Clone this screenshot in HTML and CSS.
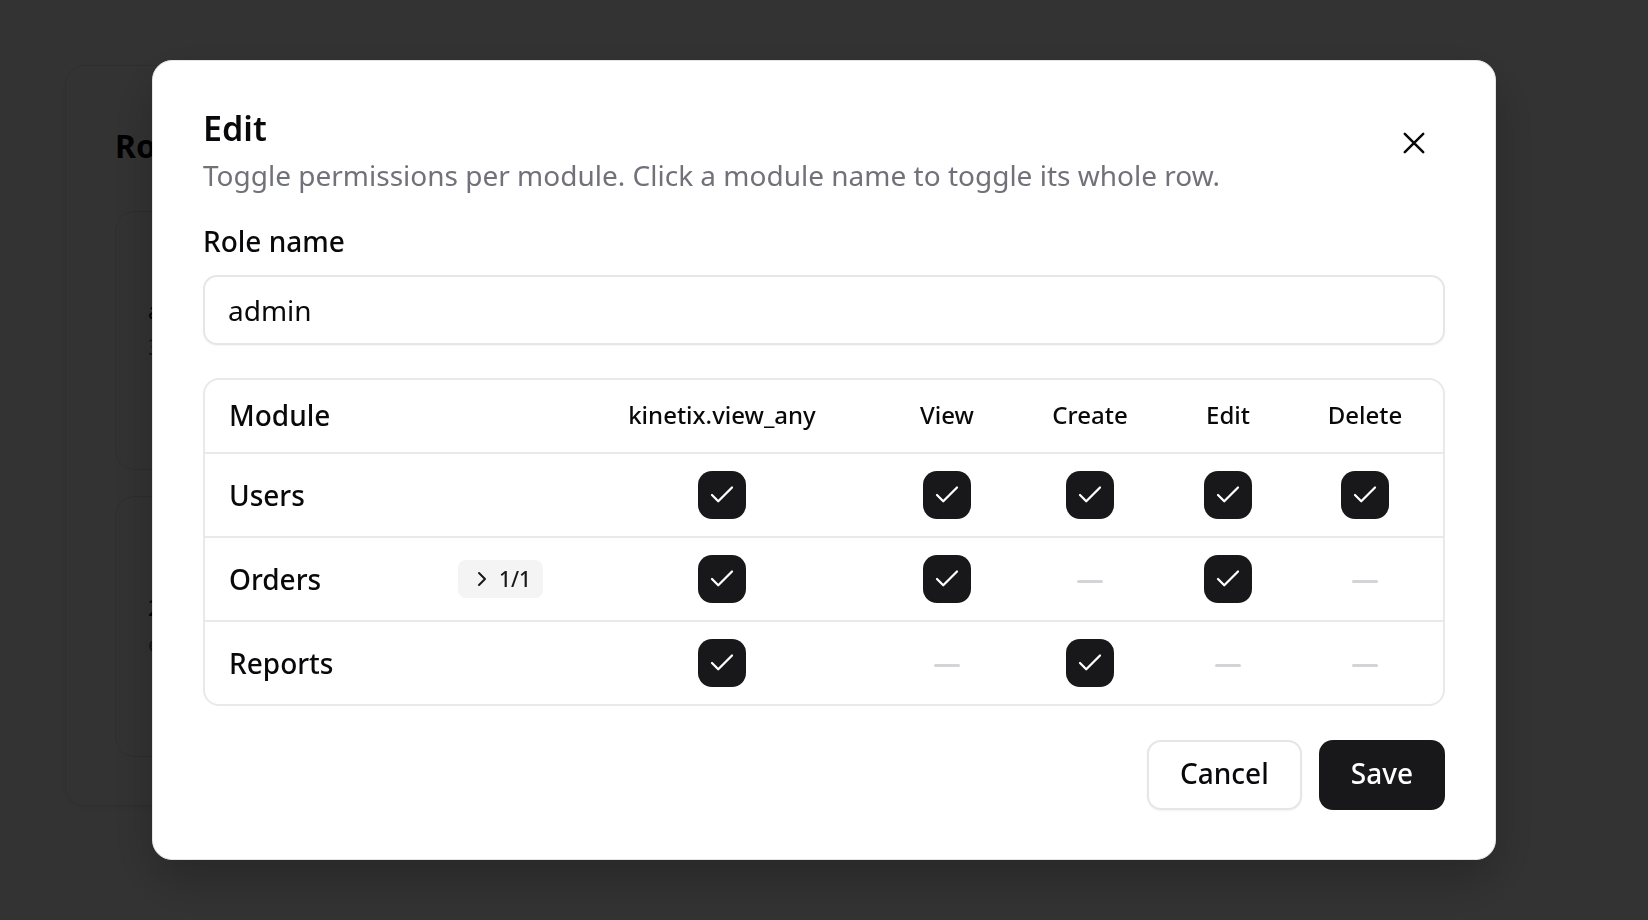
FILE: index.html
```html
<!DOCTYPE html>
<html lang="en">
<head>
<meta charset="utf-8">
<title>Edit role</title>
<link rel="stylesheet" href="styles.css">
</head>
<body>
<div class="page">
  <section class="bg-card">
    <h2 class="bg-title">Roles</h2>
    <div class="bg-inner">
      <div class="bg-line bg-line-a">admin</div>
      <div class="bg-line">3 modules</div>
    </div>
    <div class="bg-inner bg-inner-b">
      <div class="bg-line bg-line-a">2 users</div>
      <div class="bg-line">editor</div>
    </div>
  </section>
</div>

<div class="overlay">
  <div class="modal">
    <button class="close" aria-label="Close">
      <svg width="22" height="22" viewBox="0 0 22 22" fill="none" stroke="#09090b" stroke-width="2.5" stroke-linecap="round"><path d="M1.8 1.8 20.2 20.2M20.2 1.8 1.8 20.2"/></svg>
    </button>
    <h1 class="title">Edit</h1>
    <p class="subtitle">Toggle permissions per module. Click a module name to toggle its whole row.</p>

    <label class="label">Role name</label>
    <div class="input">admin</div>

    <div class="table">
      <div class="row head">
        <div class="cell name">Module</div>
        <div class="cell col">kinetix.view_any</div>
        <div class="cell col">View</div>
        <div class="cell col">Create</div>
        <div class="cell col">Edit</div>
        <div class="cell col">Delete</div>
      </div>
      <div class="row">
        <div class="cell name">Users</div>
        <div class="cell"><span class="cb"><svg width="30" height="30" viewBox="0 0 24 24" fill="none" stroke="#fff" stroke-width="1.8" stroke-linecap="round" stroke-linejoin="round"><path d="M20 6 9 17l-5-5"/></svg></span></div>
        <div class="cell"><span class="cb"><svg width="30" height="30" viewBox="0 0 24 24" fill="none" stroke="#fff" stroke-width="1.8" stroke-linecap="round" stroke-linejoin="round"><path d="M20 6 9 17l-5-5"/></svg></span></div>
        <div class="cell"><span class="cb"><svg width="30" height="30" viewBox="0 0 24 24" fill="none" stroke="#fff" stroke-width="1.8" stroke-linecap="round" stroke-linejoin="round"><path d="M20 6 9 17l-5-5"/></svg></span></div>
        <div class="cell"><span class="cb"><svg width="30" height="30" viewBox="0 0 24 24" fill="none" stroke="#fff" stroke-width="1.8" stroke-linecap="round" stroke-linejoin="round"><path d="M20 6 9 17l-5-5"/></svg></span></div>
        <div class="cell"><span class="cb"><svg width="30" height="30" viewBox="0 0 24 24" fill="none" stroke="#fff" stroke-width="1.8" stroke-linecap="round" stroke-linejoin="round"><path d="M20 6 9 17l-5-5"/></svg></span></div>
      </div>
      <div class="row">
        <div class="cell name">Orders
          <span class="badge"><svg width="24" height="24" viewBox="0 0 24 24" fill="none" stroke="#18181b" stroke-width="2" stroke-linecap="round" stroke-linejoin="round"><path d="m9 18 6-6-6-6"/></svg>1/1</span>
        </div>
        <div class="cell"><span class="cb"><svg width="30" height="30" viewBox="0 0 24 24" fill="none" stroke="#fff" stroke-width="1.8" stroke-linecap="round" stroke-linejoin="round"><path d="M20 6 9 17l-5-5"/></svg></span></div>
        <div class="cell"><span class="cb"><svg width="30" height="30" viewBox="0 0 24 24" fill="none" stroke="#fff" stroke-width="1.8" stroke-linecap="round" stroke-linejoin="round"><path d="M20 6 9 17l-5-5"/></svg></span></div>
        <div class="cell"><span class="dash"></span></div>
        <div class="cell"><span class="cb"><svg width="30" height="30" viewBox="0 0 24 24" fill="none" stroke="#fff" stroke-width="1.8" stroke-linecap="round" stroke-linejoin="round"><path d="M20 6 9 17l-5-5"/></svg></span></div>
        <div class="cell"><span class="dash"></span></div>
      </div>
      <div class="row last">
        <div class="cell name">Reports</div>
        <div class="cell"><span class="cb"><svg width="30" height="30" viewBox="0 0 24 24" fill="none" stroke="#fff" stroke-width="1.8" stroke-linecap="round" stroke-linejoin="round"><path d="M20 6 9 17l-5-5"/></svg></span></div>
        <div class="cell"><span class="dash"></span></div>
        <div class="cell"><span class="cb"><svg width="30" height="30" viewBox="0 0 24 24" fill="none" stroke="#fff" stroke-width="1.8" stroke-linecap="round" stroke-linejoin="round"><path d="M20 6 9 17l-5-5"/></svg></span></div>
        <div class="cell"><span class="dash"></span></div>
        <div class="cell"><span class="dash"></span></div>
      </div>
    </div>

    <div class="actions">
      <button class="btn btn-outline">Cancel</button>
      <button class="btn btn-primary">Save</button>
    </div>
  </div>
</div>
</body>
</html>
```
FILE: styles.css
```css
* { box-sizing: border-box; }
html, body { margin: 0; padding: 0; }
body {
  width: 1648px;
  height: 920px;
  overflow: hidden;
  background: #ffffff;
  font-family: "Noto Sans", "Open Sans", sans-serif;
  color: #09090b;
}

/* background page */
.page { padding: 65px; }
.bg-card {
  width: 1400px;
  height: 741px;
  border: 1px solid #e4e4e7;
  border-radius: 20px;
  padding: 60px 49px 48px;
  box-shadow: 0 2px 6px rgba(0,0,0,0.08);
}
.bg-title {
  margin: 0;
  font-size: 32px;
  line-height: 40px;
  font-weight: 700;
}
.bg-inner {
  margin-top: 45px;
  height: 259px;
  border: 1px solid #e4e4e7;
  border-radius: 20px;
  padding: 80px 32px;
}
.bg-inner-b { margin-top: 26px; height: 261px; padding-top: 92px; }
.bg-line { font-size: 22px; line-height: 36px; color: #71717a; }
.bg-line-a { color: #09090b; }

/* overlay + modal */
.overlay {
  position: fixed;
  inset: 0;
  background: rgba(0,0,0,0.8);
  display: flex;
  align-items: center;
  justify-content: center;
}
.modal {
  position: relative;
  width: 1344px;
  background: #fff;
  border: 1px solid #e4e4e7;
  border-radius: 20px;
  padding: 50px 50px 49px;
  display: flex;
  flex-direction: column;
  box-shadow: 0 20px 50px rgba(0,0,0,0.25);
}
.close {
  position: absolute;
  top: 66px;
  right: 65px;
  width: 32px;
  height: 32px;
  padding: 0;
  border: 0;
  background: transparent;
  display: flex;
  align-items: center;
  justify-content: center;
}
.title {
  margin: 0;
  font-size: 34px;
  line-height: 35px;
  font-weight: 600;
  color: #09090b;
}
.subtitle {
  margin: 9px 0 0;
  font-size: 28px;
  line-height: 40px;
  color: #71717a;
}
.label {
  margin-top: 26px;
  font-size: 28px;
  line-height: 40px;
  font-weight: 500;
  color: #09090b;
}
.input {
  margin-top: 14px;
  height: 70px;
  border: 2px solid #e6e6e9;
  border-radius: 14px;
  padding: 0 23px;
  display: flex;
  align-items: center;
  font-size: 28px;
  color: #09090b;
  box-shadow: 0 1px 2px rgba(0,0,0,0.04);
}

/* permissions table */
.table {
  margin-top: 33px;
  border: 2px solid #e9e9ec;
  border-radius: 16px;
  overflow: hidden;
}
.row {
  display: grid;
  grid-template-columns: 356px 322px 128px 158px 118px 1fr;
  height: 84px;
  border-bottom: 2px solid #e9e9ec;
}
.row.head { height: 74px; padding-bottom: 3px; }
.row.last { border-bottom: 0; height: 82px; }
.cell {
  display: flex;
  align-items: center;
  justify-content: center;
}
.cell.name {
  justify-content: space-between;
  padding: 0 18px 0 24px;
  font-size: 28px;
  font-weight: 500;
  color: #09090b;
}
.cell.col {
  font-size: 24px;
  font-weight: 500;
  color: #09090b;
}
.cb {
  width: 48px;
  height: 48px;
  border-radius: 14px;
  background: #18181b;
  display: flex;
  align-items: center;
  justify-content: center;
}
.dash {
  width: 26px;
  height: 3px;
  border-radius: 2px;
  background: #d4d4d8;
  margin-top: 4px;
}
.badge {
  height: 38px;
  padding: 0 12px 0 12px;
  border-radius: 8px;
  background: #f4f4f5;
  display: flex;
  align-items: center;
  gap: 5px;
  font-size: 21px;
  font-weight: 500;
  color: #18181b;
}

/* footer buttons */
.actions {
  margin-top: 34px;
  display: flex;
  justify-content: flex-end;
  gap: 17px;
}
.btn {
  height: 70px;
  border-radius: 14px;
  padding: 0 32px 4px;
  font-family: "Noto Sans", "Open Sans", sans-serif;
  font-size: 28px;
  font-weight: 500;
  cursor: pointer;
}
.btn-outline {
  background: #fff;
  color: #09090b;
  border: 2px solid #e6e6e9;
  box-shadow: 0 1px 2px rgba(0,0,0,0.05);
  padding: 0 31px 4px;
}
.btn-primary {
  background: #18181b;
  color: #fff;
  border: 0;
}
```
